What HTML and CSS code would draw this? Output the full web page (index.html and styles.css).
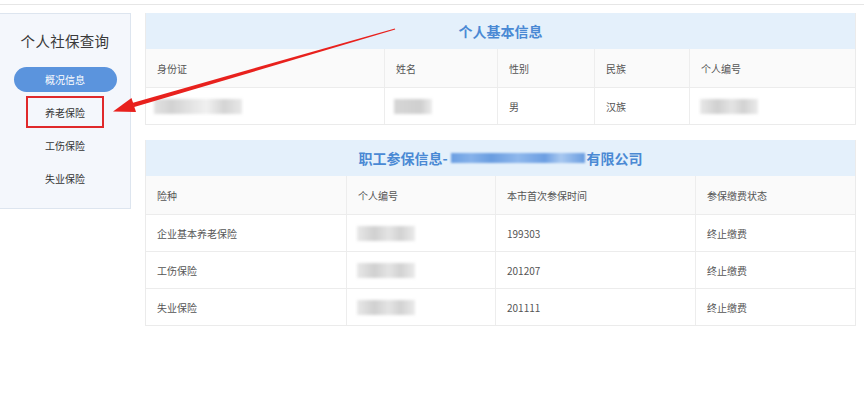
FILE: index.html
```html
<!DOCTYPE html>
<html lang="zh-CN">
<head>
<meta charset="utf-8">
<title>个人社保查询</title>
<link rel="stylesheet" href="styles.css">
</head>
<body>
<div class="topline"></div>
<div class="page">
  <aside class="sidebar">
    <div class="side-title">个人社保查询</div>
    <div class="side-btn">概况信息</div>
    <div class="side-item marked">养老保险</div>
    <div class="side-item">工伤保险</div>
    <div class="side-item">失业保险</div>
  </aside>
  <main class="main">
    <section class="card">
      <div class="band">个人基本信息</div>
      <div class="grid g1 head">
        <div class="cell">身份证</div>
        <div class="cell">姓名</div>
        <div class="cell">性别</div>
        <div class="cell">民族</div>
        <div class="cell">个人编号</div>
      </div>
      <div class="grid g1">
        <div class="cell"><span class="blur b-id"></span></div>
        <div class="cell"><span class="blur b-name"></span></div>
        <div class="cell">男</div>
        <div class="cell">汉族</div>
        <div class="cell"><span class="blur b-no"></span></div>
      </div>
    </section>
    <section class="card">
      <div class="band">职工参保信息-<span class="blur-title"></span>有限公司</div>
      <div class="grid g2 head">
        <div class="cell">险种</div>
        <div class="cell">个人编号</div>
        <div class="cell">本市首次参保时间</div>
        <div class="cell">参保缴费状态</div>
      </div>
      <div class="grid g2">
        <div class="cell">企业基本养老保险</div>
        <div class="cell"><span class="blur b-no"></span></div>
        <div class="cell">199303</div>
        <div class="cell">终止缴费</div>
      </div>
      <div class="grid g2">
        <div class="cell">工伤保险</div>
        <div class="cell"><span class="blur b-no"></span></div>
        <div class="cell">201207</div>
        <div class="cell">终止缴费</div>
      </div>
      <div class="grid g2">
        <div class="cell">失业保险</div>
        <div class="cell"><span class="blur b-no"></span></div>
        <div class="cell">201111</div>
        <div class="cell">终止缴费</div>
      </div>
    </section>
  </main>
</div>
<svg class="arrow" width="864" height="394" viewBox="0 0 864 394" xmlns="http://www.w3.org/2000/svg">
  <polygon points="134.2,107.1 132.2,102.9 394.9,28.4 395.2,29.6" fill="#e8211d"/>
  <polygon points="113,111.5 136,112 131.5,98" fill="#e8211d"/>
</svg>
</body>
</html>
```
FILE: styles.css
```css
* { box-sizing: border-box; }
html, body { margin: 0; padding: 0; background: #fff; }
body {
  width: 864px;
  height: 394px;
  overflow: hidden;
  position: relative;
  font-family: "Noto Sans CJK SC", "Noto Sans", "Liberation Sans", sans-serif;
  color: #555;
}
.topline {
  height: 5px;
  border-bottom: 1px solid #e6e6e6;
}
.page {
  display: flex;
  align-items: flex-start;
  gap: 14px;
  padding-top: 8px;
}
.sidebar {
  width: 131px;
  height: 196px;
  background: #f4f7fc;
  border: 1px solid #dde5ef;
  border-left: none;
  display: flex;
  flex-direction: column;
  align-items: center;
  padding-top: 17px;
}
.side-title {
  font-size: 14.5px;
  line-height: 20px;
  color: #3a3a3a;
  letter-spacing: 0.3px;
}
.side-btn {
  margin-top: 16px;
  width: 103px;
  height: 25px;
  border-radius: 13px;
  background: #5b94dd;
  color: #fff;
  font-size: 10px;
  display: flex;
  align-items: center;
  justify-content: center;
}
.side-item {
  width: 78px;
  height: 33px;
  font-size: 10px;
  color: #333;
  display: flex;
  align-items: center;
  justify-content: center;
}
.side-item.marked {
  margin-top: 4px;
  height: 32px;
  border: 2px solid #e0292b;
  margin-bottom: 1px;
}
.main {
  width: 711px;
  display: flex;
  flex-direction: column;
  gap: 15px;
}
.card {
  border: 1px solid #ebebeb;
  border-top: none;
  background: #fff;
}
.band {
  height: 36px;
  background: #e4f0fb;
  color: #4a89d4;
  font-weight: bold;
  font-size: 14px;
  display: flex;
  align-items: center;
  justify-content: center;
}
.grid {
  display: grid;
  height: 37px;
  border-top: 1px solid #ececec;
}
.grid.head { background: #fafafa; border-top: none; height: 38px; }
.g1 { grid-template-columns: 238px 113px 97px 95px 1fr; }
.g2 { grid-template-columns: 200px 149px 200px 1fr; }
.cell {
  display: flex;
  align-items: center;
  padding: 0 11px;
  font-size: 10px;
  color: #555;
  border-left: 1px solid #ededed;
}
.cell:first-child { border-left: none; }
.blur {
  display: block;
  height: 15px;
  filter: blur(1.5px);
  background: linear-gradient(90deg, #e2e2e2 0%, #d2d2d2 20%, #e6e6e6 45%, #f0f0f0 60%, #d4d4d4 80%, #e8e8e8 100%);
}
.b-id { width: 88px; margin-left: -3px; }
.b-name { width: 38px; margin-left: -2px; background: linear-gradient(90deg, #d6d6d6, #cfcfcf 70%, #ececec); }
.b-no { width: 58px; margin-left: -1px; background: linear-gradient(90deg, #e8e8e8, #d0d0d0 30%, #e4e4e4 55%, #d2d2d2 75%, #ebebeb); }
.blur-title {
  display: inline-block;
  width: 134px;
  height: 10px;
  margin: 0 2px 0 3px;
  filter: blur(1px);
  background: linear-gradient(90deg, #6b9fe2 0%, #86b2ea 15%, #6a9de0 30%, #8fb8ec 50%, #6d9fe2 70%, #a8c8f0 82%, #6a9de0 100%);
}
.arrow {
  position: absolute;
  left: 0;
  top: 0;
  pointer-events: none;
}
```
